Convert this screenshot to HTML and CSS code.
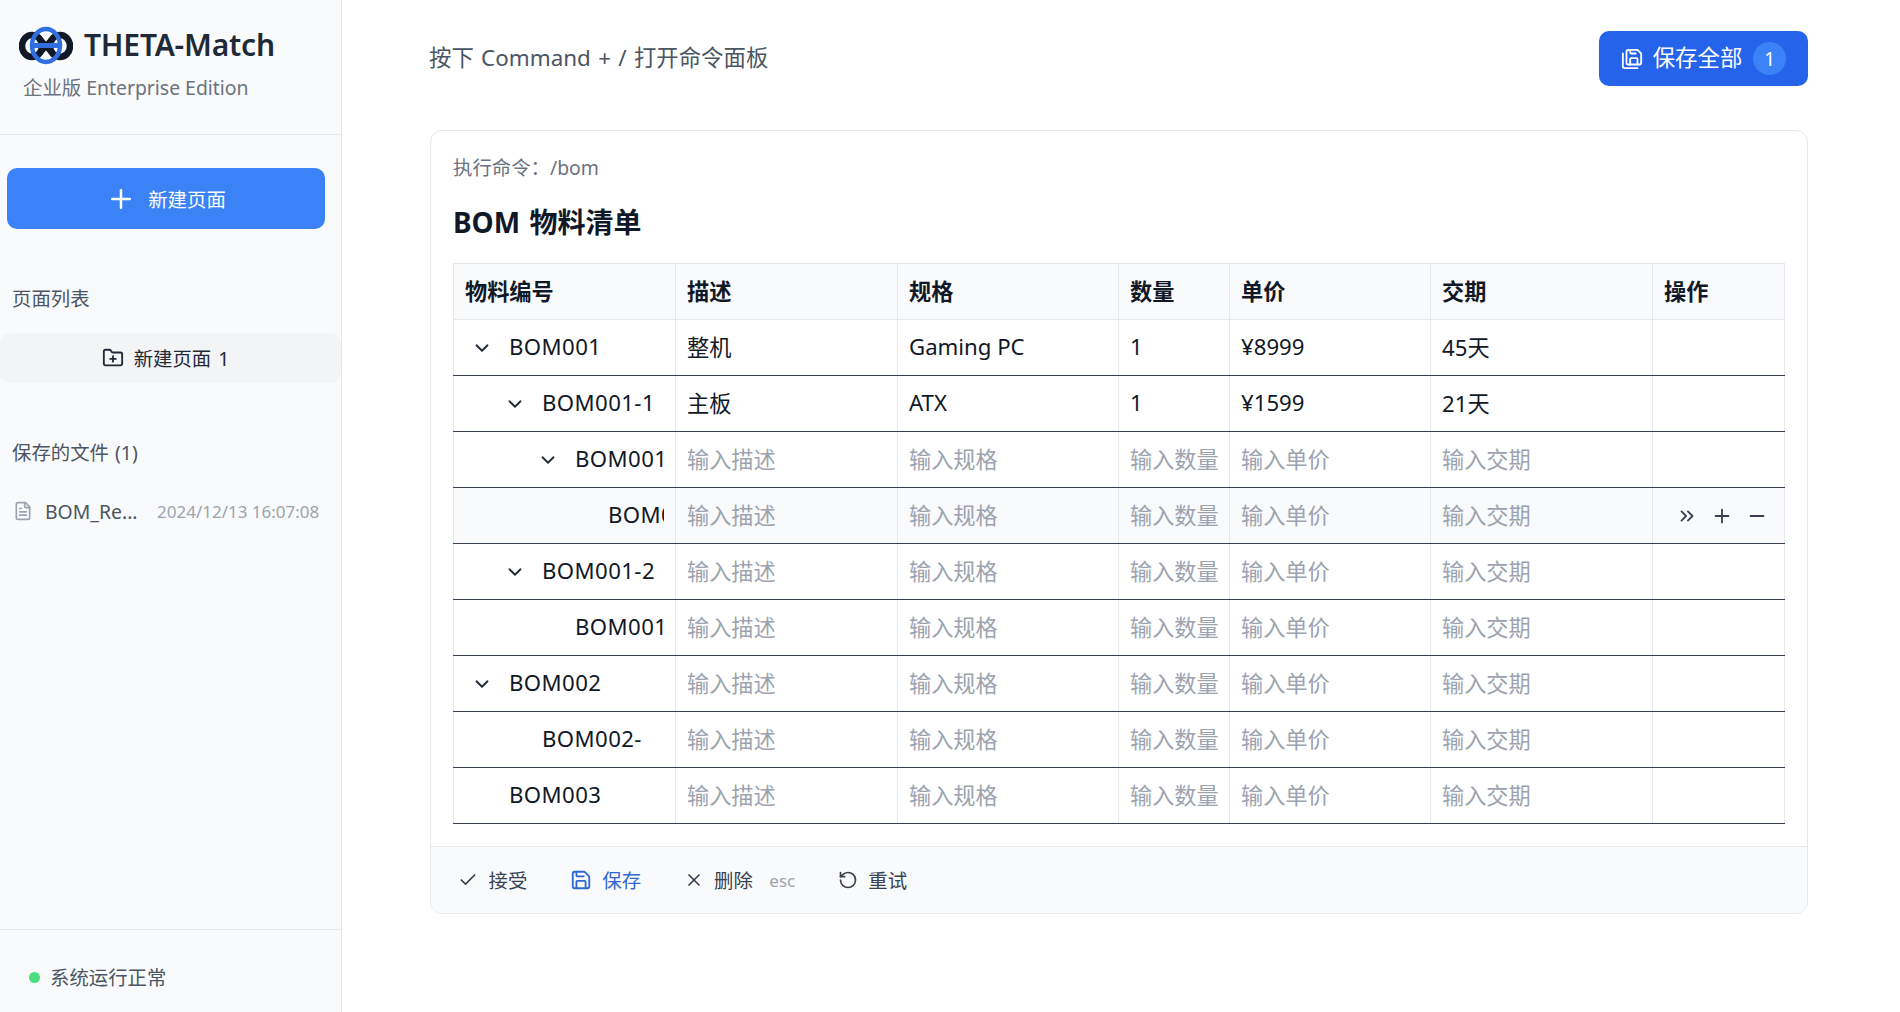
FILE: index.html
```html
<!DOCTYPE html>
<html lang="zh-CN">
<head>
<meta charset="utf-8">
<title>THETA-Match</title>
<link rel="stylesheet" href="styles.css">
</head>
<body>
<svg class="sprite" aria-hidden="true">
  <symbol id="i-chev" viewBox="0 0 24 24"><path d="m6 9 6 6 6-6"/></symbol>
  <symbol id="i-plus" viewBox="0 0 24 24"><path d="M5 12h14"/><path d="M12 5v14"/></symbol>
  <symbol id="i-minus" viewBox="0 0 24 24"><path d="M5 12h14"/></symbol>
  <symbol id="i-chevs" viewBox="0 0 24 24"><path d="m6 17 5-5-5-5"/><path d="m13 17 5-5-5-5"/></symbol>
  <symbol id="i-save" viewBox="0 0 24 24"><path d="M15.2 3a2 2 0 0 1 1.4.6l3.8 3.8a2 2 0 0 1 .6 1.4V19a2 2 0 0 1-2 2H5a2 2 0 0 1-2-2V5a2 2 0 0 1 2-2z"/><path d="M17 21v-7a1 1 0 0 0-1-1H8a1 1 0 0 0-1 1v7"/><path d="M7 3v4a1 1 0 0 0 1 1h7"/></symbol>
  <symbol id="i-saveall" viewBox="0 0 24 24"><path d="M10 2v3a1 1 0 0 0 1 1h5"/><path d="M18 18v-6a1 1 0 0 0-1-1h-6a1 1 0 0 0-1 1v6"/><path d="M18 22H4a2 2 0 0 1-2-2V6"/><path d="M8 18a2 2 0 0 1-2-2V4a2 2 0 0 1 2-2h9.172a2 2 0 0 1 1.414.586l2.828 2.828A2 2 0 0 1 22 6.828V16a2 2 0 0 1-2 2z"/></symbol>
</svg>
<div class="app">
  <aside class="sidebar">
    <header class="brand">
      <div class="brand-row">
        <svg class="logo" viewBox="0 0 54 40">
          <ellipse cx="13" cy="20" rx="10" ry="11" class="logo-dark"/>
          <ellipse cx="41" cy="20" rx="10" ry="11" class="logo-dark"/>
          <path class="logo-x" d="M18 10 36 30M36 10 18 30"/>
          <ellipse cx="27" cy="19.5" rx="14" ry="16.5" class="logo-blue"/>
          <path class="logo-bar" d="M14 19.5h26"/>
        </svg>
        <span class="brand-name">THETA-Match</span>
      </div>
      <div class="brand-sub">企业版 Enterprise Edition</div>
    </header>
    <div class="new-wrap">
      <button class="new-btn"><svg class="ic ic-30"><use href="#i-plus"/></svg>新建页面</button>
    </div>
    <div class="side-title">页面列表</div>
    <div class="page-item">
      <svg class="ic ic-22" viewBox="0 0 24 24"><path d="M12 10v6"/><path d="M9 13h6"/><path d="M20 20a2 2 0 0 0 2-2V8a2 2 0 0 0-2-2h-7.9a2 2 0 0 1-1.69-.9L9.6 3.9A2 2 0 0 0 7.93 3H4a2 2 0 0 0-2 2v13a2 2 0 0 0 2 2Z"/></svg>
      <span class="lift-sm">新建页面 1</span>
    </div>
    <div class="side-title saved-title">保存的文件 (1)</div>
    <div class="file-row">
      <svg class="ic ic-20 file-ic" viewBox="0 0 24 24"><path d="M15 2H6a2 2 0 0 0-2 2v16a2 2 0 0 0 2 2h12a2 2 0 0 0 2-2V7Z"/><path d="M14 2v4a2 2 0 0 0 2 2h4"/><path d="M10 9H8"/><path d="M16 13H8"/><path d="M16 17H8"/></svg>
      <span class="file-name">BOM_Re...</span>
      <span class="file-date">2024/12/13 16:07:08</span>
    </div>
    <footer class="status"><span class="dot"></span><span class="lift-sm">系统运行正常</span></footer>
  </aside>
  <main class="main">
    <div class="topbar">
      <div class="hint">按下 Command + / 打开命令面板</div>
      <button class="save-all"><svg class="ic ic-22"><use href="#i-saveall"/></svg><span class="lift">保存全部</span><span class="badge">1</span></button>
    </div>
    <section class="card">
      <div class="card-body">
        <div class="cmd">执行命令：/bom</div>
        <h1 class="title">BOM 物料清单</h1>
        <table class="bom">
          <colgroup><col class="c1"><col class="c2"><col class="c3"><col class="c4"><col class="c5"><col class="c6"><col class="c7"></colgroup>
          <thead><tr><th>物料编号</th><th>描述</th><th>规格</th><th>数量</th><th>单价</th><th>交期</th><th>操作</th></tr></thead>
          <tbody>
            <tr>
              <td><div class="code l0"><svg class="ic chev"><use href="#i-chev"/></svg><span class="code-text">BOM001</span></div></td>
              <td>整机</td><td>Gaming PC</td><td>1</td><td>¥8999</td><td>45天</td><td></td>
            </tr>
            <tr>
              <td><div class="code l1"><svg class="ic chev"><use href="#i-chev"/></svg><span class="code-text">BOM001-1</span></div></td>
              <td>主板</td><td>ATX</td><td>1</td><td>¥1599</td><td>21天</td><td></td>
            </tr>
            <tr>
              <td><div class="code l2"><svg class="ic chev"><use href="#i-chev"/></svg><span class="code-text">BOM001</span></div></td>
              <td class="ph">输入描述</td><td class="ph">输入规格</td><td class="ph">输入数量</td><td class="ph">输入单价</td><td class="ph">输入交期</td><td></td>
            </tr>
            <tr class="hover">
              <td><div class="code l3"><span class="chev-space"></span><span class="code-text">BOM0</span></div></td>
              <td class="ph">输入描述</td><td class="ph">输入规格</td><td class="ph">输入数量</td><td class="ph">输入单价</td><td class="ph">输入交期</td>
              <td><div class="ops"><svg class="ic ic-22"><use href="#i-chevs"/></svg><svg class="ic ic-22"><use href="#i-plus"/></svg><svg class="ic ic-22"><use href="#i-minus"/></svg></div></td>
            </tr>
            <tr>
              <td><div class="code l1"><svg class="ic chev"><use href="#i-chev"/></svg><span class="code-text">BOM001-2</span></div></td>
              <td class="ph">输入描述</td><td class="ph">输入规格</td><td class="ph">输入数量</td><td class="ph">输入单价</td><td class="ph">输入交期</td><td></td>
            </tr>
            <tr>
              <td><div class="code l2"><span class="chev-space"></span><span class="code-text">BOM001</span></div></td>
              <td class="ph">输入描述</td><td class="ph">输入规格</td><td class="ph">输入数量</td><td class="ph">输入单价</td><td class="ph">输入交期</td><td></td>
            </tr>
            <tr>
              <td><div class="code l0"><svg class="ic chev"><use href="#i-chev"/></svg><span class="code-text">BOM002</span></div></td>
              <td class="ph">输入描述</td><td class="ph">输入规格</td><td class="ph">输入数量</td><td class="ph">输入单价</td><td class="ph">输入交期</td><td></td>
            </tr>
            <tr>
              <td><div class="code l1"><span class="chev-space"></span><span class="code-text">BOM002-</span></div></td>
              <td class="ph">输入描述</td><td class="ph">输入规格</td><td class="ph">输入数量</td><td class="ph">输入单价</td><td class="ph">输入交期</td><td></td>
            </tr>
            <tr>
              <td><div class="code l0"><span class="chev-space"></span><span class="code-text">BOM003</span></div></td>
              <td class="ph">输入描述</td><td class="ph">输入规格</td><td class="ph">输入数量</td><td class="ph">输入单价</td><td class="ph">输入交期</td><td></td>
            </tr>
          </tbody>
        </table>
      </div>
      <div class="actions">
        <button class="act"><svg class="ic ic-20" viewBox="0 0 24 24"><path d="M20 6 9 17l-5-5"/></svg><span class="lift-sm">接受</span></button>
        <button class="act act-save"><svg class="ic ic-22"><use href="#i-save"/></svg><span class="lift-sm">保存</span></button>
        <button class="act"><svg class="ic ic-20" viewBox="0 0 24 24"><path d="M18 6 6 18"/><path d="m6 6 12 12"/></svg><span class="lift-sm">删除</span><span class="esc">esc</span></button>
        <button class="act"><svg class="ic ic-20" viewBox="0 0 24 24"><path d="M3 12a9 9 0 1 0 9-9 9.75 9.75 0 0 0-6.74 2.74L3 8"/><path d="M3 3v5h5"/></svg><span class="lift-sm">重试</span></button>
      </div>
    </section>
  </main>
</div>
</body>
</html>
```

FILE: styles.css
```css
* { box-sizing: border-box; }
html, body { margin: 0; height: 100%; }
body {
  font-family: "Noto Sans", "Noto Sans CJK SC", sans-serif;
  color: #111827;
  background: #fff;
  overflow: hidden;
}
.sprite { display: none; }
.ic {
  fill: none;
  stroke: currentColor;
  stroke-width: 2;
  stroke-linecap: round;
  stroke-linejoin: round;
  flex: none;
}
.ic-30 { width: 30px; height: 30px; }
.ic-22 { width: 22px; height: 22px; }
.ic-20 { width: 20px; height: 20px; }

.app { display: flex; height: 1012px; }

/* Sidebar */
.sidebar {
  width: 342px;
  flex: none;
  display: flex;
  flex-direction: column;
  background: #f9fafb;
  border-right: 1px solid #e5e7eb;
}
.brand {
  height: 135px;
  padding: 24px 0 0 19px;
  border-bottom: 1px solid #e5e7eb;
}
.brand-row { display: flex; align-items: center; gap: 11px; height: 44px; }
.logo { width: 54px; height: 40px; flex: none; }
.logo-dark { fill: none; stroke: #111827; stroke-width: 6.5; }
.logo-blue { fill: none; stroke: #2f6fe0; stroke-width: 4.5; }
.logo-x { fill: none; stroke: #111827; stroke-width: 6; }
.logo-bar { fill: none; stroke: #2f6fe0; stroke-width: 5; }
.brand-name { font-size: 30px; font-weight: 600; color: #1f2937; letter-spacing: -0.2px; margin-bottom: 4px; }
.brand-sub { font-size: 19.4px; line-height: 26px; color: #6b7280; margin: 7px 0 0 4px; }
.new-wrap { padding: 33px 16px 0 7px; }
.new-btn {
  width: 100%;
  height: 61px;
  display: flex;
  align-items: center;
  justify-content: center;
  gap: 12px;
  border: 0;
  border-radius: 10px;
  background: #3b82f6;
  color: #fff;
  font: inherit;
  font-size: 19.4px;
}
.lift-sm { margin-bottom: 2px; }
.side-title { font-size: 19.4px; line-height: 26px; color: #4b5563; padding: 57px 0 0 12px; word-spacing: 1px; }
.page-item {
  margin-top: 21px;
  height: 50px;
  padding-right: 10px;
  display: flex;
  align-items: center;
  justify-content: center;
  gap: 10px;
  background: #f3f4f6;
  border-radius: 10px;
  font-size: 19.4px;
  word-spacing: 2px;
  color: #1f2937;
}
.saved-title { padding-top: 57px; }
.file-row {
  display: flex;
  align-items: center;
  height: 26px;
  margin-top: 32px;
  padding-left: 13px;
  font-size: 19.4px;
  color: #4b5563;
}
.file-ic { color: #9ca3af; }
.file-name { margin-left: 12px; width: 112px; white-space: nowrap; }
.file-date { font-size: 17px; color: #9ca3af; white-space: nowrap; }
.status {
  margin-top: auto;
  height: 83px;
  border-top: 1px solid #e5e7eb;
  display: flex;
  align-items: center;
  padding: 12px 0 0 29px;
  font-size: 19.4px;
  color: #4b5563;
}
.dot { width: 11px; height: 11px; border-radius: 50%; background: #4ade80; margin-right: 10px; }

/* Main */
.main { flex: 1; padding: 0 92px 0 88px; min-width: 0; }
.topbar {
  height: 130px;
  padding-bottom: 13px;
  display: flex;
  align-items: center;
  justify-content: space-between;
}
.hint { font-size: 22.4px; word-spacing: 1.5px; color: #4b5563; margin-bottom: 4px; margin-left: -1px; }
.save-all {
  width: 209px;
  height: 55px;
  display: flex;
  align-items: center;
  justify-content: center;
  gap: 10px;
  border: 0;
  border-radius: 10px;
  background: #2563eb;
  color: #fff;
  font: inherit;
  font-size: 22.4px;
}
.lift { margin-bottom: 4px; }
.badge {
  width: 33px;
  height: 33px;
  border-radius: 50%;
  background: #3b82f6;
  font-size: 19px;
  display: flex;
  align-items: center;
  justify-content: center;
  margin-left: 1px;
}

.card {
  width: 1378px;
  height: 784px;
  border: 1px solid #e5e7eb;
  border-radius: 12px;
  overflow: hidden;
  background: #fff;
  display: flex;
  flex-direction: column;
}
.card-body { flex: 1; padding: 23px 22px 0; }
.cmd { font-size: 19.4px; line-height: 28px; color: #6b7280; }
.title { margin: 20px 0 0; font-size: 28px; line-height: 40px; font-weight: 700; color: #111827; word-spacing: 2px; }
.bom {
  margin-top: 21px;
  width: 1331px;
  table-layout: fixed;
  border-collapse: collapse;
  font-size: 22.2px;
}
.c1 { width: 222px; } .c2 { width: 222px; } .c3 { width: 221px; }
.c4 { width: 111px; } .c5 { width: 201px; } .c6 { width: 222px; } .c7 { width: 132px; }
.bom th, .bom td {
  height: 56px;
  padding: 0 11px 3px;
  border: 1px solid #e5e7eb;
  text-align: left;
  white-space: nowrap;
  overflow: hidden;
  color: #111827;
}
.bom th { background: #f9fafb; font-weight: 700; }
.bom tbody tr td { border-bottom: 1px solid #374151; }
.bom td.ph { color: #9ca3af; }
.hover td { background: #f9fafb; }
.code { display: flex; align-items: center; overflow: hidden; }
.code-text { margin-left: 16px; flex: 1; min-width: 0; overflow: hidden; white-space: nowrap; letter-spacing: 0.4px; }
.chev { width: 22px; height: 22px; margin-left: 6px; margin-top: 3px; color: #1f2937; }
.chev-space { width: 22px; height: 22px; margin-left: 6px; flex: none; }
.l0 { padding-left: 0; } .l1 { padding-left: 33px; } .l2 { padding-left: 66px; } .l3 { padding-left: 99px; }
.ops { display: flex; gap: 13px; padding-left: 12px; margin-top: 3px; color: #374151; }

.actions {
  height: 67px;
  flex: none;
  display: flex;
  align-items: center;
  padding-left: 27px;
  gap: 42.5px;
  background: #f9fafb;
  border-top: 1px solid #e5e7eb;
}
.act {
  display: flex;
  align-items: center;
  gap: 10.5px;
  border: 0;
  background: none;
  padding: 0;
  font: inherit;
  font-size: 19.4px;
  color: #374151;
}
.act-save { color: #2f68d0; }
.esc { font-size: 17px; color: #9ca3af; margin-left: 6px; }
```
